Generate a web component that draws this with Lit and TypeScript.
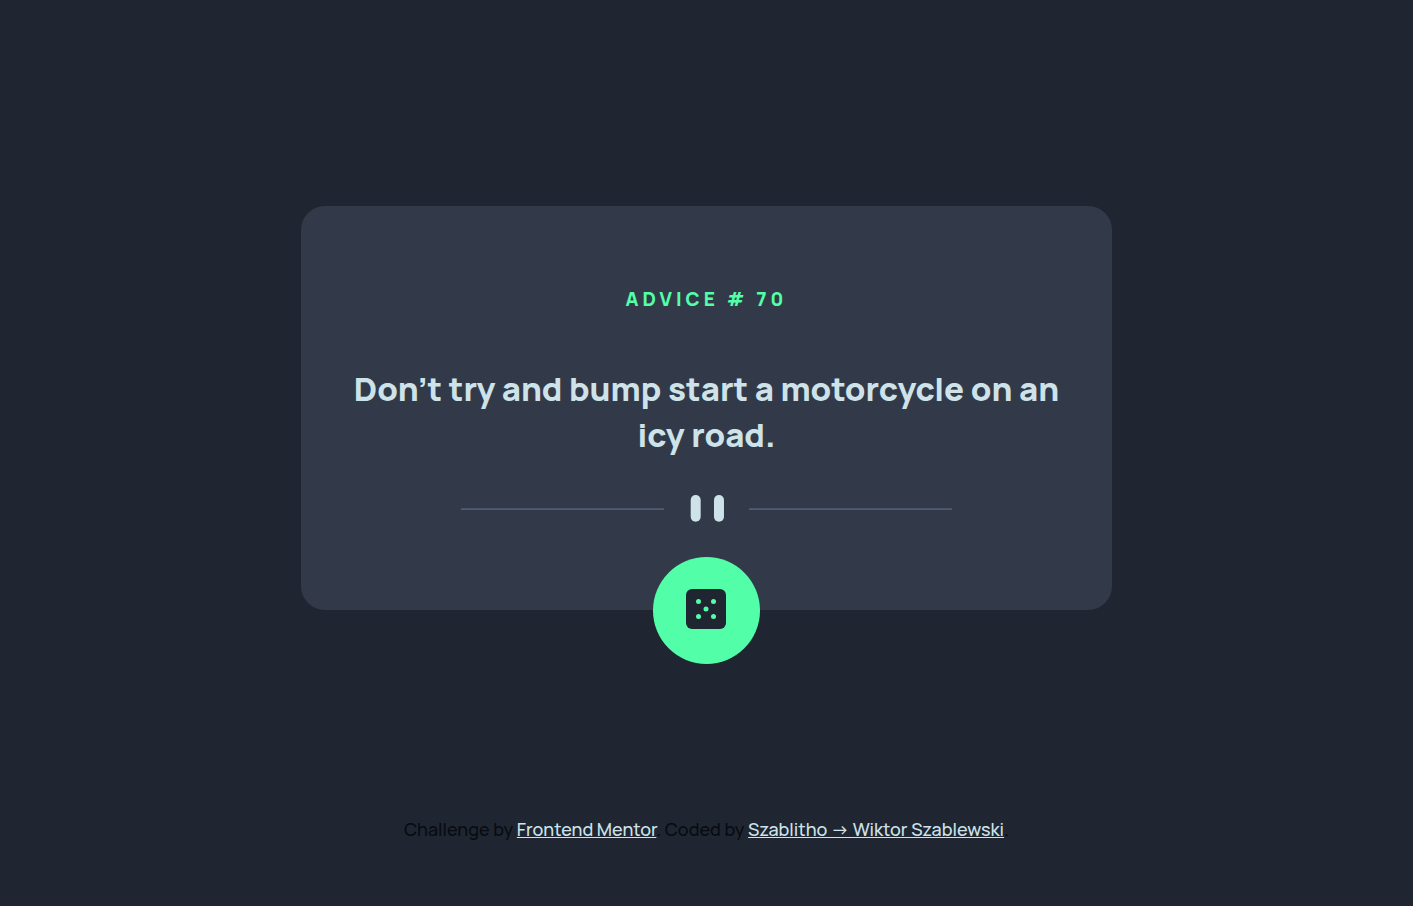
import { LitElement, html, css } from "lit";
import { customElement, state } from "lit/decorators.js";

interface Advice {
  id: number;
  text: string;
}

@customElement("app-root")
export class AppRoot extends LitElement {
  @state() private advice: Advice = {
    id: 70,
    text: "Don’t try and bump start a motorcycle on an icy road.",
  };

  static styles = css`
    :host {
      display: flex;
      flex-direction: column;
      min-height: 100vh;
      background: #1f2632;
      font-family: Manrope, Inter, "Open Sans", sans-serif;
      color: #080b10;
    }
    main {
      display: flex;
      align-items: center;
      justify-content: center;
      min-height: 90vh;
    }
    .card {
      box-sizing: border-box;
      display: flex;
      flex-direction: column;
      align-items: center;
      width: 90%;
      max-width: 811px;
      padding: 80px 48px 0;
      border-radius: 24px;
      background: #323a49;
      text-align: center;
    }
    .title {
      margin: 0;
      color: #52ffa8;
      font-size: 19px;
      line-height: 26px;
      font-weight: 800;
      letter-spacing: 4px;
    }
    .quote {
      margin: 54px 0 37px;
      color: #cee3e9;
      font-size: 33px;
      line-height: 46px;
      font-weight: 800;
    }
    .divider {
      display: block;
      width: 100%;
      max-width: 491px;
    }
    .dice {
      display: flex;
      width: 107px;
      height: 107px;
      margin: 35px 0 -54px;
      padding: 32px 33px;
      border: 0;
      border-radius: 50%;
      background: #52ffa8;
      cursor: pointer;
    }
    .dice svg {
      flex: none;
    }
    footer {
      padding: 0 16px;
      text-align: center;
      font-size: 18px;
      line-height: 28px;
      font-weight: 500;
    }
    a {
      color: #cee3e9;
    }
  `;

  render() {
    return html`
      <main>
        <section class="card">
          <h1 class="title">ADVICE # ${this.advice.id}</h1>
          <p class="quote">${this.advice.text}</p>
          <svg class="divider" viewBox="0 0 295 16" aria-hidden="true">
            <path fill="#4f5d74" d="M0 8h122v1H0zM173 8h122v1H173z" />
            <g fill="#cee3e9">
              <rect x="138" width="6" height="16" rx="3" />
              <rect x="152" width="6" height="16" rx="3" />
            </g>
          </svg>
          <button class="dice" type="button" aria-label="New advice">
            <svg width="40" height="40" viewBox="0 0 40 40" aria-hidden="true">
              <rect width="40" height="40" rx="6" fill="#1f2632" />
              <g fill="#52ffa8">
                <circle cx="12.5" cy="12.5" r="2.5" />
                <circle cx="27.5" cy="12.5" r="2.5" />
                <circle cx="20" cy="20" r="2.5" />
                <circle cx="12.5" cy="27.5" r="2.5" />
                <circle cx="27.5" cy="27.5" r="2.5" />
              </g>
            </svg>
          </button>
        </section>
      </main>
      <footer>
        Challenge by <a href="#frontend-mentor">Frontend Mentor</a>. Coded by
        <a href="#author">Szablitho → Wiktor Szablewski</a>.
      </footer>
    `;
  }
}
